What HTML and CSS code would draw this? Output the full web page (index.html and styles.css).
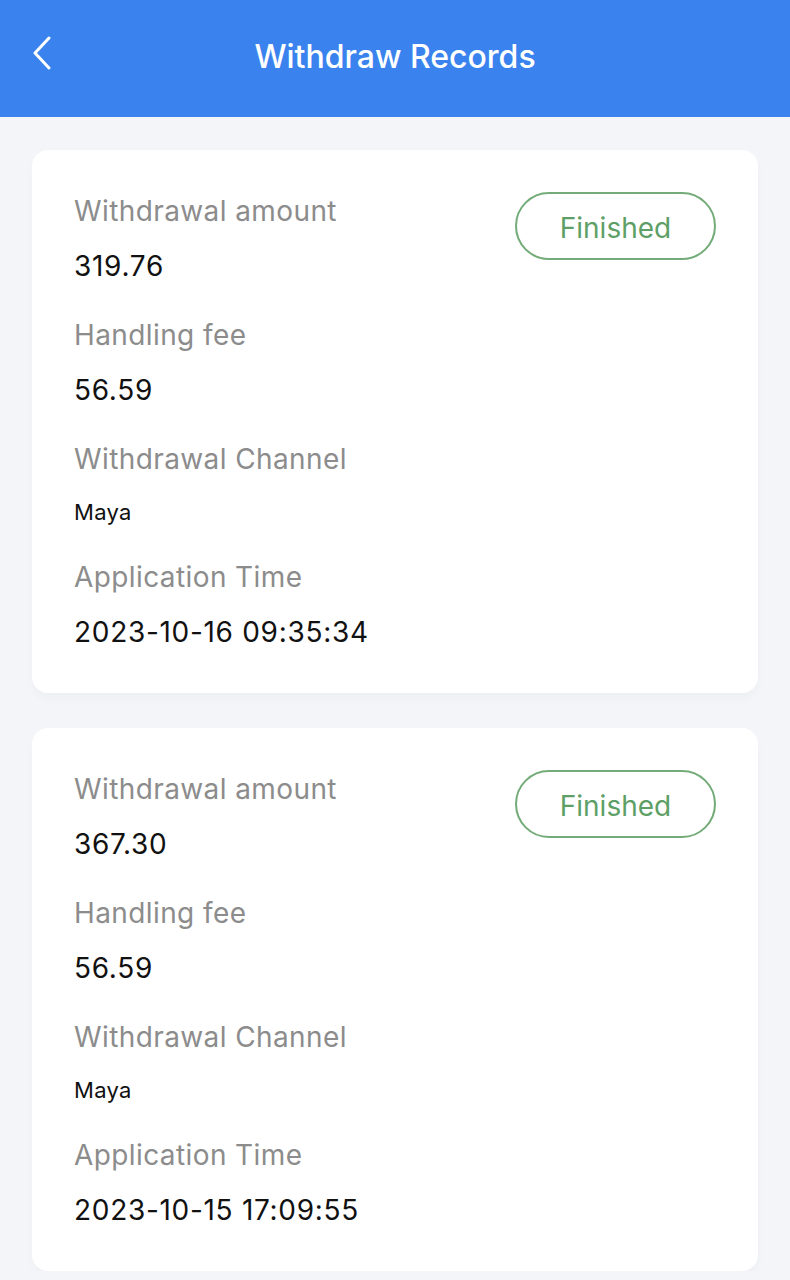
FILE: index.html
```html
<!DOCTYPE html>
<html lang="en">
<head>
  <meta charset="UTF-8" />
  <meta name="viewport" content="width=device-width, initial-scale=1" />
  <title>Withdraw Records</title>
  <link rel="stylesheet" href="styles.css">
</head>
<body>

  <div class="topbar">
    <a class="back" href="#">
      <svg width="20" height="34" viewBox="0 0 20 34">
        <path d="M17 2 L3 17 L17 32" fill="none" stroke="#fff" stroke-width="3" stroke-linecap="round" stroke-linejoin="round"/>
      </svg>
    </a>
    <h1>Withdraw Records</h1>
  </div>

  <div class="lista">

    <div class="registro">
      <div class="fila-top">
        <div class="campo">
          <div class="etiqueta">Withdrawal amount</div>
          <div class="valor">319.76</div>
        </div>
        <span class="estado">Finished</span>
      </div>
      <div class="campo">
        <div class="etiqueta">Handling fee</div>
        <div class="valor">56.59</div>
      </div>
      <div class="campo canal">
        <div class="etiqueta">Withdrawal Channel</div>
        <div class="valor chico">Maya</div>
      </div>
      <div class="campo">
        <div class="etiqueta">Application Time</div>
        <div class="valor">2023-10-16 09:35:34</div>
      </div>
    </div>

    <div class="registro">
      <div class="fila-top">
        <div class="campo">
          <div class="etiqueta">Withdrawal amount</div>
          <div class="valor">367.30</div>
        </div>
        <span class="estado">Finished</span>
      </div>
      <div class="campo">
        <div class="etiqueta">Handling fee</div>
        <div class="valor">56.59</div>
      </div>
      <div class="campo canal">
        <div class="etiqueta">Withdrawal Channel</div>
        <div class="valor chico">Maya</div>
      </div>
      <div class="campo">
        <div class="etiqueta">Application Time</div>
        <div class="valor">2023-10-15 17:09:55</div>
      </div>
    </div>

  </div>

</body>
</html>
```

FILE: styles.css
```css
body {
  font-family: Inter, "Liberation Sans", sans-serif;
  background-color: #f4f5f9;
  margin: 0;
  padding: 0;
}
.topbar {
  height: 117px;
  background-color: #3a83ee;
  display: flex;
  align-items: center;
  justify-content: center;
  position: relative;
}
.topbar h1 {
  margin: 0 0 5px 0;
  color: #fff;
  font-size: 32px;
  font-weight: 500;
}
.back {
  position: absolute;
  left: 32px;
  top: 36px;
  display: block;
  line-height: 0;
}
.lista {
  padding: 33px 32px 0 32px;
  display: flex;
  flex-direction: column;
  gap: 35px;
}
.registro {
  background: #fff;
  border-radius: 16px;
  padding: 41px 42px 41px 42px;
  box-shadow: 0 6px 8px rgba(0, 0, 0, 0.025);
}
.fila-top {
  display: flex;
  justify-content: space-between;
  align-items: flex-start;
}
.campo {
  margin-bottom: 29px;
}
.campo.canal {
  margin-bottom: 25px;
}
.registro > .campo:last-child {
  margin-bottom: 0;
}
.etiqueta {
  color: #8c8c8c;
  font-size: 28px;
  line-height: 40px;
  letter-spacing: 0.4px;
}
.valor {
  color: #111;
  font-size: 28px;
  line-height: 40px;
  margin-top: 15px;
  letter-spacing: 0.7px;
}
.valor.chico {
  font-size: 22px;
  margin-top: 13px;
  letter-spacing: 0.3px;
}
.estado {
  margin-top: 1px;
  width: 201px;
  height: 68px;
  box-sizing: border-box;
  border: 2px solid #73ac78;
  border-radius: 34px;
  padding-top: 3px;
  color: #5e9f67;
  font-size: 28px;
  display: flex;
  align-items: center;
  justify-content: center;
}
```
